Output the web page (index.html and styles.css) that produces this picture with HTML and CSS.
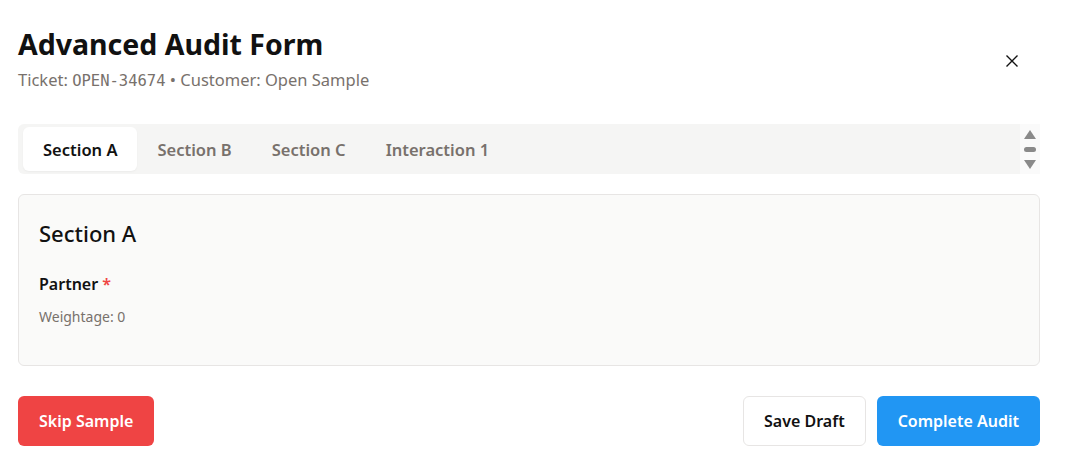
FILE: index.html
```html
<!DOCTYPE html>
<html>
<head>
<meta charset="utf-8">
<link rel="stylesheet" href="styles.css">
</head>
<body>
<div class="modal">
  <header class="header">
    <div class="titles">
      <h1 class="title">Advanced Audit Form</h1>
      <p class="subtitle">Ticket: <span class="mono">OPEN-34674</span> • Customer: Open Sample</p>
    </div>
    <button class="close" aria-label="Close">
      <svg width="14" height="14" viewBox="0 0 14 14"><path d="M1.5 1.5L12.5 12.5M12.5 1.5L1.5 12.5" stroke="#111" stroke-width="1.4" fill="none"/></svg>
    </button>
  </header>

  <div class="tabbar">
    <div class="tabs">
      <button class="tab active">Section A</button>
      <button class="tab">Section B</button>
      <button class="tab">Section C</button>
      <button class="tab">Interaction 1</button>
    </div>
    <div class="scroll">
      <svg width="14" height="12" viewBox="0 0 14 12"><path d="M7 1L13 10H1Z" fill="#8a8a8a"/></svg>
      <span class="thumb"></span>
      <svg width="14" height="12" viewBox="0 0 14 12"><path d="M1 2H13L7 11Z" fill="#8a8a8a"/></svg>
    </div>
  </div>

  <section class="card">
    <h2 class="card-title">Section A</h2>
    <div class="field">
      <div class="label">Partner <span class="req">*</span></div>
      <div class="hint">Weightage: 0</div>
    </div>
  </section>

  <footer class="footer">
    <button class="btn danger">Skip Sample</button>
    <div class="right">
      <button class="btn outline">Save Draft</button>
      <button class="btn primary">Complete Audit</button>
    </div>
  </footer>
</div>
</body>
</html>
```

FILE: styles.css
```css
* { box-sizing: border-box; }
body {
  margin: 0;
  background: #fff;
  font-family: "Noto Sans", "Open Sans", sans-serif;
  color: #111;
}
.modal {
  width: 1068px;
  padding: 24px 28px 0 18px;
}
.header {
  display: flex;
  justify-content: space-between;
  align-items: center;
}
.title {
  margin: 0;
  font-size: 28.5px;
  font-weight: 700;
  line-height: 40px;
}
.subtitle {
  margin: 4px 0 0;
  font-size: 16.5px;
  line-height: 24px;
  color: #78716c;
}
.mono {
  font-family: "DejaVu Sans Mono", monospace;
  font-size: 15.5px;
}
.close {
  border: 0;
  background: none;
  padding: 0;
  width: 24px;
  height: 24px;
  display: flex;
  align-items: center;
  justify-content: center;
  margin-top: 4px;
  margin-right: 16px;
}
.tabbar {
  margin-top: 31px;
  width: 1022px;
  height: 50px;
  display: flex;
  background: #f5f5f4;
  border-radius: 6px 0 0 6px;
}
.tabs {
  flex: 1;
  display: flex;
  padding: 3px 5px;
}
.tab {
  border: 0;
  background: none;
  font-family: inherit;
  font-size: 16.5px;
  font-weight: 600;
  color: #78716c;
  padding: 0 20px;
  height: 44px;
  border-radius: 6px;
}
.tab.active {
  background: #fff;
  color: #111;
  box-shadow: 0 1px 2px rgba(0,0,0,0.04);
}
.scroll {
  width: 20px;
  background: #fafafa;
  display: flex;
  flex-direction: column;
  align-items: center;
  justify-content: space-between;
  padding: 5px 0 4px;
}
.thumb {
  width: 12px;
  height: 5px;
  border-radius: 3px;
  background: #8a8a8a;
}
.card {
  margin-top: 20px;
  width: 1022px;
  height: 172px;
  background: #fafaf9;
  border: 1px solid #e7e5e4;
  border-radius: 6px;
  padding: 20px 20px;
}
.card-title {
  margin: 0;
  font-size: 22px;
  font-weight: 500;
  line-height: 36px;
}
.field { margin-top: 21px; }
.label {
  font-size: 16px;
  font-weight: 600;
  line-height: 24px;
}
.req { color: #ef4444; }
.hint {
  margin-top: 11px;
  font-size: 14px;
  color: #78716c;
  line-height: 20px;
}
.footer {
  margin-top: 30px;
  width: 1022px;
  display: flex;
  justify-content: space-between;
}
.right { display: flex; gap: 11px; }
.btn {
  height: 50px;
  padding: 0 20px;
  font-family: inherit;
  font-size: 16px;
  font-weight: 600;
  border-radius: 6px;
  border: 1px solid transparent;
}
.danger { background: #ef4444; color: #fff; }
.outline { background: #fff; color: #111; border-color: #e7e5e4; }
.primary { background: #2196f3; color: #fff; }
```
